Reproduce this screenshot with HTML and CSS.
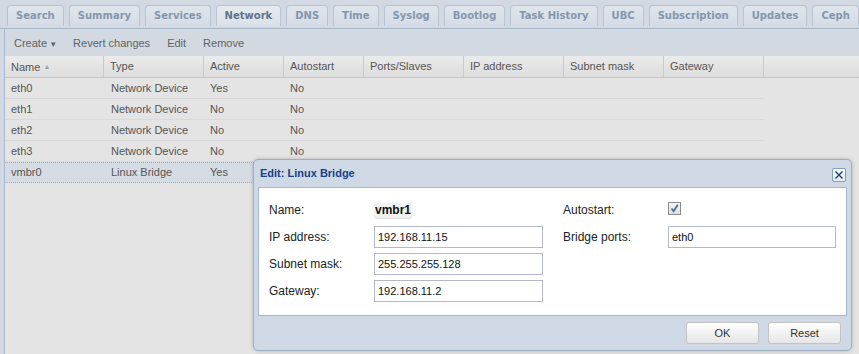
FILE: index.html
```html
<!DOCTYPE html>
<html lang="en">
<head>
    <meta charset="UTF-8">
    <title>Network</title>
    <link rel="stylesheet" href="styles.css">
</head>
<body>
    <div class="tabbar">
        <span class="tab">Search</span>
        <span class="tab">Summary</span>
        <span class="tab">Services</span>
        <span class="tab active">Network</span>
        <span class="tab">DNS</span>
        <span class="tab">Time</span>
        <span class="tab">Syslog</span>
        <span class="tab">Bootlog</span>
        <span class="tab">Task History</span>
        <span class="tab">UBC</span>
        <span class="tab">Subscription</span>
        <span class="tab">Updates</span>
        <span class="tab">Ceph</span>
    </div>

    <div class="panel">
        <div class="toolbar">
            <span class="tbtn">Create <span class="caret">&#9662;</span></span>
            <span class="tbtn">Revert changes</span>
            <span class="tbtn">Edit</span>
            <span class="tbtn">Remove</span>
        </div>

        <div class="grid-head">
            <div class="hcell c-name">Name <span class="sort">&#9650;</span></div>
            <div class="hcell c-type">Type</div>
            <div class="hcell c-short">Active</div>
            <div class="hcell c-short">Autostart</div>
            <div class="hcell c-wide">Ports/Slaves</div>
            <div class="hcell c-wide">IP address</div>
            <div class="hcell c-wide">Subnet mask</div>
            <div class="hcell c-wide">Gateway</div>
        </div>

        <div class="grid-body">
            <div class="row">
                <div class="cell c-name">eth0</div><div class="cell c-type">Network Device</div>
                <div class="cell c-short">Yes</div><div class="cell c-short">No</div>
            </div>
            <div class="row">
                <div class="cell c-name">eth1</div><div class="cell c-type">Network Device</div>
                <div class="cell c-short">No</div><div class="cell c-short">No</div>
            </div>
            <div class="row">
                <div class="cell c-name">eth2</div><div class="cell c-type">Network Device</div>
                <div class="cell c-short">No</div><div class="cell c-short">No</div>
            </div>
            <div class="row">
                <div class="cell c-name">eth3</div><div class="cell c-type">Network Device</div>
                <div class="cell c-short">No</div><div class="cell c-short">No</div>
            </div>
            <div class="row selected">
                <div class="cell c-name">vmbr0</div><div class="cell c-type">Linux Bridge</div>
                <div class="cell c-short">Yes</div><div class="cell c-short"></div>
            </div>
        </div>
    </div>

    <div class="window">
        <div class="win-head">
            <span class="win-title">Edit: Linux Bridge</span>
            <span class="win-close">
                <svg width="10" height="10" viewBox="0 0 10 10"><path d="M1.5 1.5 L8.5 8.5 M8.5 1.5 L1.5 8.5" stroke="#1f3d6e" stroke-width="1.4"/></svg>
            </span>
        </div>
        <div class="win-body">
            <div class="col">
                <div class="field"><label>Name:</label><span class="display">vmbr1</span></div>
                <div class="field"><label>IP address:</label><input class="left-input" type="text" value="192.168.11.15"></div>
                <div class="field"><label>Subnet mask:</label><input class="left-input" type="text" value="255.255.255.128"></div>
                <div class="field"><label>Gateway:</label><input class="left-input" type="text" value="192.168.11.2"></div>
            </div>
            <div class="col">
                <div class="field"><label>Autostart:</label>
                    <span class="check">
                        <svg width="11" height="11" viewBox="0 0 11 11"><path d="M2.5 5.5 L4.6 8.2 L8.8 1.8" fill="none" stroke="#4d6a9c" stroke-width="1.8"/></svg>
                    </span>
                </div>
                <div class="field"><label>Bridge ports:</label><input class="right-input" type="text" value="eth0"></div>
            </div>
        </div>
        <div class="win-foot">
            <button class="btn">OK</button>
            <button class="btn">Reset</button>
        </div>
    </div>
</body>
</html>
```

FILE: styles.css
```css
body {
    margin: 0;
    height: 354px;
    overflow: hidden;
    background: #d2d9e2;
    font-family: "Liberation Sans", Arial, sans-serif;
    font-size: 11px;
    color: #555;
}
.tabbar {
    display: flex;
    gap: 5px;
    height: 29px;
    box-sizing: border-box;
    padding: 5px 0 0 7px;
    border-bottom: 1px solid #a9b9cc;
    white-space: nowrap;
}
.tab {
    height: 21px;
    box-sizing: border-box;
    padding: 0 8px;
    border: 1px solid #b6c4d4;
    border-bottom: none;
    border-radius: 4px 4px 0 0;
    background: linear-gradient(#dfe5ec, #d5dce5);
    font: bold 10px "DejaVu Sans", Verdana, sans-serif;
    line-height: 20px;
    color: #8496ae;
}
.tab.active {
    background: linear-gradient(#e6ebf0, #dbe1e8);
    color: #60728b;
}
.panel {
    margin-left: 4px;
    border-left: 1px solid #a9b9cc;
    height: 325px;
    background: #e4e4e4;
}
.toolbar {
    display: flex;
    align-items: center;
    gap: 17px;
    height: 27px;
    padding-left: 9px;
    background: #d3d9e0;
    color: #5f6266;
}
.caret {
    font-size: 9px;
    margin-left: 1px;
}
.grid-head {
    display: flex;
    height: 22px;
    box-sizing: border-box;
    background: linear-gradient(#ebebeb, #dddddd);
    border-bottom: 1px solid #c6c6c6;
}
.hcell, .cell {
    box-sizing: border-box;
    padding-left: 6px;
    white-space: nowrap;
}
.hcell {
    line-height: 21px;
    border-right: 1px solid #c9c9c9;
}
.sort {
    font-size: 7px;
    color: #9aa3ad;
    vertical-align: 2px;
}
.c-name { width: 99px; }
.c-type { width: 100px; }
.c-short { width: 80px; }
.c-wide { width: 100px; }
.row {
    display: flex;
    width: 759px;
    height: 21px;
    box-sizing: border-box;
    border-bottom: 1px solid #d9d9d9;
    line-height: 21px;
}
.row .c-type { padding-left: 7px; }
.row.selected {
    background: #d6dce4;
    border-top: 1px dotted #a9afb7;
    border-bottom: 1px dotted #a9afb7;
    line-height: 19px;
}
.window {
    position: absolute;
    left: 253px;
    top: 159px;
    width: 599px;
    height: 192px;
    box-sizing: border-box;
    border: 1px solid #9daec3;
    border-radius: 5px;
    background: #cfd9e5;
    box-shadow: 0 0 4px rgba(0, 0, 0, 0.2);
}
.win-head {
    position: relative;
    height: 27px;
    padding-left: 6px;
    line-height: 27px;
}
.win-title {
    font-weight: bold;
    font-size: 11px;
    color: #15428b;
}
.win-close {
    position: absolute;
    right: 5px;
    top: 8px;
    width: 14px;
    height: 14px;
    box-sizing: border-box;
    border: 1px solid #7f9dc6;
    border-radius: 2px;
    background: linear-gradient(#ffffff, #e3ebf5);
    display: flex;
    align-items: center;
    justify-content: center;
}
.win-body {
    display: flex;
    gap: 20px;
    height: 129px;
    box-sizing: border-box;
    margin: 0 4px;
    padding: 11px 10px 0 10px;
    background: #fff;
    border: 1px solid #a3b8d3;
    color: #222;
    font-size: 12px;
}
.field {
    display: flex;
    align-items: center;
    height: 22px;
    margin-bottom: 5px;
}
.field label {
    width: 105px;
    flex: none;
}
.display {
    font-weight: bold;
    color: #111;
    padding: 0 1px;
    border-radius: 3px;
    background: #f1f1f1;
    box-shadow: 0 1px 1px #ddd;
    line-height: 15px;
}
input {
    height: 22px;
    box-sizing: border-box;
    padding: 0 3px;
    border: 1px solid #b5b8c8;
    font-family: "Liberation Sans", Arial, sans-serif;
    font-size: 11px;
    color: #111;
    background: #fff;
}
.left-input { width: 169px; }
.right-input { width: 168px; }
.check {
    width: 13px;
    height: 13px;
    box-sizing: border-box;
    margin-top: -4px;
    border: 1px solid #8a8c8e;
    background: linear-gradient(#f4f4f4, #dedede);
    display: flex;
    align-items: center;
    justify-content: center;
}
.win-foot {
    display: flex;
    justify-content: flex-end;
    gap: 9px;
    padding: 6px 10px 0 0;
}
.btn {
    width: 73px;
    height: 22px;
    border: 1px solid #c3c3c3;
    border-radius: 3px;
    background: linear-gradient(#ffffff, #e6e6e6);
    font-family: "Liberation Sans", Arial, sans-serif;
    font-size: 11px;
    color: #333;
}
```
